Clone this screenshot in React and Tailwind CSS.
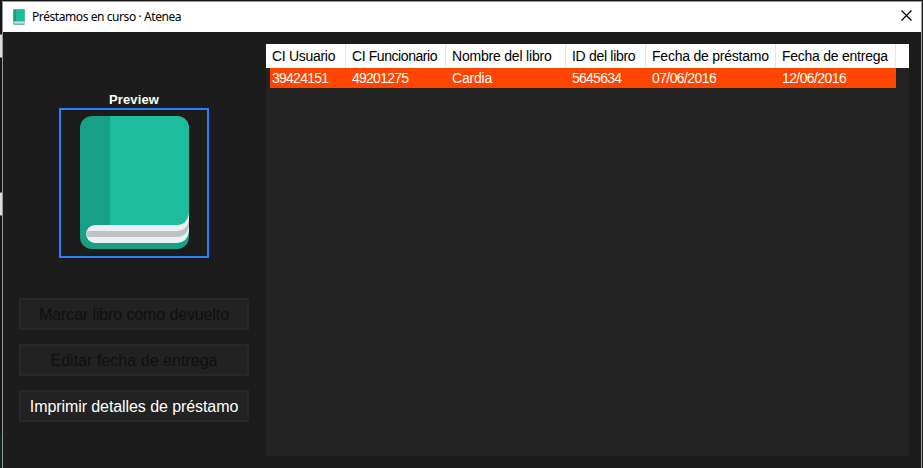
const columns = [
  { title: "CI Usuario", value: "39424151", width: "w-20", tone: "tracking-[-0.3px]", valueTone: "tracking-[-0.75px]" },
  { title: "CI Funcionario", value: "49201275", width: "w-[100px]", tone: "tracking-[-0.42px]", valueTone: "tracking-[-0.75px]" },
  { title: "Nombre del libro", value: "Cardia", width: "w-[120px]", tone: "tracking-[-0.2px]", valueTone: "tracking-[-0.2px]" },
  { title: "ID del libro", value: "5645634", width: "w-20", tone: "tracking-[-0.3px]", valueTone: "tracking-[-0.75px]" },
  { title: "Fecha de préstamo", value: "07/06/2016", width: "w-[130px]", tone: "tracking-[-0.23px]", valueTone: "tracking-[-0.6px]" },
  { title: "Fecha de entrega", value: "12/06/2016", width: "w-[120px]", tone: "tracking-[-0.25px]", valueTone: "tracking-[-0.6px]" },
];

function Book({ className }) {
  return (
    <svg className={className} viewBox="0 0 109 133" preserveAspectRatio="none" aria-hidden="true">
      <rect width="109" height="133" rx="12" fill="#17a085" />
      <path d="M30 0H97A12 12 0 0 1 109 12V98Q107 109 97 109H30Z" fill="#1cbc9c" />
      <path d="M109 97Q107 109 97 109H15A9 9 0 0 0 15 127H97Q108 126 109 115Z" fill="#ecf0f1" />
      <path d="M109 104Q107 115 97 115H7Q5.500 118 7 121H97Q107 121 109 110Z" fill="#bdc3c7" />
    </svg>
  );
}

// Simplified book for the title bar, where the full drawing is too fine to read.
function SmallBook() {
  return (
    <svg className="h-4 w-3" viewBox="0 0 12 16" aria-hidden="true">
      <rect width="12" height="16" rx="1" fill="#6fbfae" />
      <path d="M1 .5H3.500V12.500H.5V1Z" fill="#17a085" />
      <path d="M3.500.5H11L11.500 1V12.500H3.500Z" fill="#1cbc9c" />
      <path d="M1 12.500H12V14.500H1Z" fill="#d0dcda" />
    </svg>
  );
}

function ActionButton({ children, disabled, tone }) {
  return (
    <button
      disabled={disabled}
      className={`flex h-8 w-[230px] items-center justify-center whitespace-nowrap border-2 border-[#282828] bg-[#222222] pt-0.5 text-[16px] leading-none ${tone} ${disabled ? "text-[#101010]" : "text-white"}`}
    >
      {children}
    </button>
  );
}

export default function App() {
  return (
    <div className="flex h-[468px] w-[923px] overflow-hidden bg-[#151517] font-['Liberation_Sans',Arial,sans-serif]">
      <div className="flex w-0.5 shrink-0 flex-col">
        <div className="h-[34px]" />
        <div className="h-6 border-y border-[#777777] bg-[#dddddd]" />
        <div className="h-[134px]" />
        <div className="h-6 border-y border-[#777777] bg-[#dddddd]" />
        <div className="h-[218px]" />
        <div className="flex-1 bg-[#10221f]" />
      </div>
      <main className="mt-px flex h-[467px] w-[920px] shrink-0 flex-col border-x border-t border-[#999999] bg-[#1c1c1c]">
        <header className="flex h-[30px] shrink-0 items-center bg-white pl-[10px] pr-[9px]">
          <SmallBook />
          <h1 className="ml-[7px] whitespace-nowrap font-['Noto_Sans',sans-serif] text-[12px] leading-none tracking-[-0.42px] text-black">
            Préstamos en curso · Atenea
          </h1>
          <button aria-label="Cerrar" className="mb-[3px] ml-auto">
            <svg className="size-[11px]" viewBox="0 0 11 11" fill="none" stroke="#000" strokeWidth="1.2">
              <path d="M.5.5l10 10M10.500.5l-10 10" />
            </svg>
          </button>
        </header>
        <div className="flex min-h-0 flex-1">
          <aside className="flex w-[263px] shrink-0 flex-col pl-4">
            <h2 className="mt-[60px] mb-px w-[230px] text-center text-[13px] font-bold leading-[15px] tracking-[0.15px] text-white">
              Preview
            </h2>
            <div className="ml-10 flex h-[150px] w-[150px] items-start border-2 border-[#2a7fff] pl-[19px] pt-[6px]">
              <Book className="h-[133px] w-[109px]" />
            </div>
            <div className="mt-10 flex flex-col gap-[14px]">
              <ActionButton disabled tone="tracking-[-0.12px]">Marcar libro como devuelto</ActionButton>
              <ActionButton disabled tone="tracking-[0.03px]">Editar fecha de entrega</ActionButton>
              <ActionButton tone="tracking-[-0.08px]">Imprimir detalles de préstamo</ActionButton>
            </div>
          </aside>
          <section className="mt-3 h-[412px] w-[643px] bg-[#232323]">
            <div className="flex h-6 bg-white text-[14px] leading-[25px] text-black">
              {columns.map((c) => (
                <div key={c.title} className={`${c.width} ${c.tone} shrink-0 whitespace-nowrap border-r border-[#e5e5e5] pl-[6px]`}>
                  {c.title}
                </div>
              ))}
            </div>
            <div className="ml-1 flex h-5 w-[626px] bg-[#ff4500] text-[14px] leading-[21px] text-white">
              {columns.map((c, i) => (
                <div key={c.title} className={`${i === 0 ? "-ml-1" : ""} ${c.width} ${c.valueTone} shrink-0 whitespace-nowrap pl-[6px]`}>
                  {c.value}
                </div>
              ))}
            </div>
          </section>
        </div>
      </main>
      <div className="w-px shrink-0 bg-[#242424]" />
    </div>
  );
}
